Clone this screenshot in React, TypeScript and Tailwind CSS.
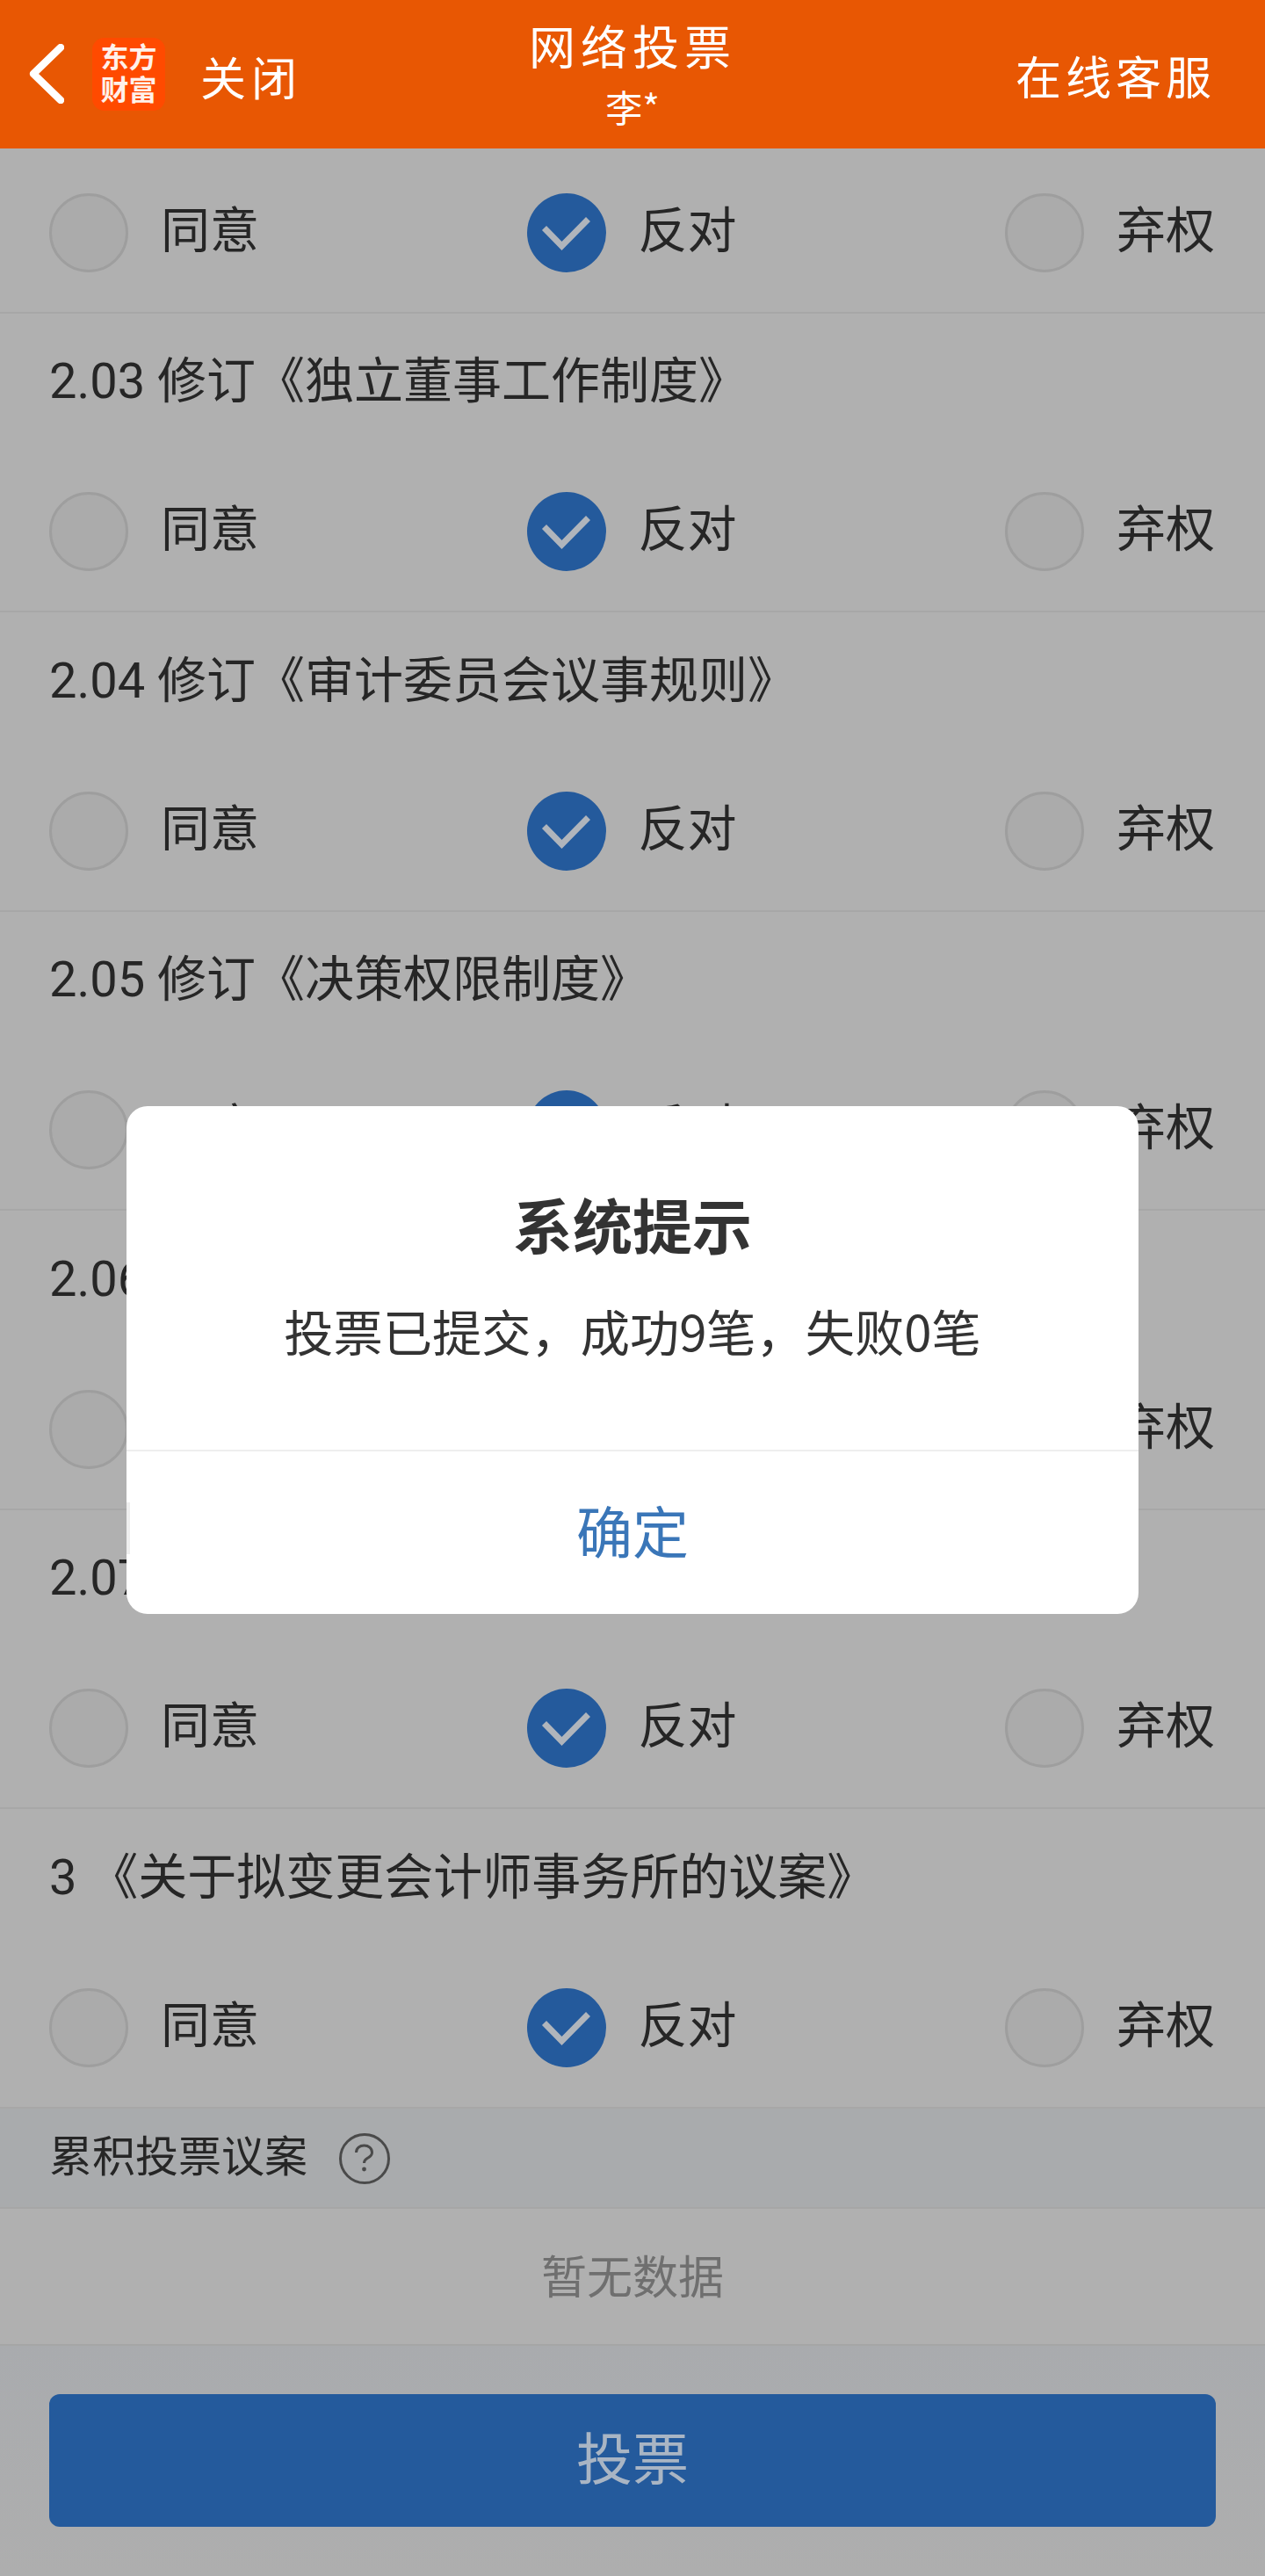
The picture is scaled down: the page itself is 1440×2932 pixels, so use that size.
import { Fragment } from 'react';

const proposals = [
  '2.03 修订《独立董事工作制度》',
  '2.04 修订《审计委员会议事规则》',
  '2.05 修订《决策权限制度》',
  '2.06 修订《募集资金管理制度》',
  '2.07 修订《关联交易制度》',
  '3 《关于拟变更会计师事务所的议案》',
];

function Option({ label, checked }: { label: string; checked?: boolean }) {
  return (
    <div className="flex items-center gap-[37px]">
      {checked ? (
        <svg width="90" height="90" viewBox="0 0 90 90" className="shrink-0 -ml-[1px]">
          <circle cx="45" cy="45" r="45" fill="#245a9c" />
          <path d="M19.5 39.5 L39.5 60 L69.5 29.5" fill="none" stroke="#b0b5bc" strokeWidth="7" />
        </svg>
      ) : (
        <div className="w-[90px] h-[90px] shrink-0 rounded-full bg-[#ababab] border-[3px] border-[#9e9e9e]" />
      )}
      <span className="text-[56px] leading-[70px] -translate-y-[2px] text-[#262626]">{label}</span>
    </div>
  );
}

function VoteRow() {
  return (
    <div className="h-[188px] pt-[51px] pl-[56px] pr-[57px] flex items-start justify-between border-b-2 border-[#a7a7a7]">
      <Option label="同意" />
      <Option label="反对" checked />
      <Option label="弃权" />
    </div>
  );
}

export default function App() {
  return (
    <div className="relative w-[1440px] h-[2932px] overflow-hidden bg-[#b0b0b0] font-['Roboto','Noto_Sans_CJK_SC',sans-serif]">
      {/* Header */}
      <div className="h-[168.5px] bg-[#e85703] grid grid-cols-3 items-center text-white font-['Noto_Sans_CJK_SC',sans-serif]">
        <div className="flex items-center pl-[33px]">
          <svg width="40" height="68" viewBox="0 0 40 68" className="shrink-0">
            <path d="M36 4 L5 34 L36 64" fill="none" stroke="#ffffff" strokeWidth="8.5" strokeLinecap="round" strokeLinejoin="round" />
          </svg>
          <div className="ml-[32px] w-[83px] h-[83px] shrink-0 rounded-[14px] bg-[#ff4a00] flex flex-col items-center justify-center pb-[5px] text-[#fff1ea] text-[32px] leading-[37px] font-bold">
            <span>东方</span>
            <span>财富</span>
          </div>
          <span className="ml-[40px] mt-[6px] text-[52px] leading-[70px] tracking-[6px]">关闭</span>
        </div>
        <div className="flex flex-col items-center">
          <span className="text-[53px] leading-[64px] tracking-[6px] -mt-[2px]">网络投票</span>
          <span className="text-[42px] leading-[52px] mt-[12px]">李*</span>
        </div>
        <div className="flex justify-end pr-[56px]">
          <span className="mt-[4px] text-[52px] leading-[70px] tracking-[5px]">在线客服</span>
        </div>
      </div>

      <VoteRow />

      {proposals.map((title) => (
        <Fragment key={title}>
          <div className="h-[152.5px] px-[56px] pt-[3px] flex items-center text-[56px] text-[#262626] whitespace-nowrap">
            {title}
          </div>
          <VoteRow />
        </Fragment>
      ))}

      {/* Cumulative voting */}
      <div className="h-[114.5px] pl-[56px] flex items-center gap-[36px] bg-[#a9abad] border-b-2 border-[#a6a6a6] text-[49px] text-[#262626]">
        <span>累积投票议案</span>
        <svg width="58" height="58" viewBox="0 0 58 58" className="shrink-0 mt-[2px]" fill="none" stroke="#4a4a4a" strokeWidth="3">
          <circle cx="29" cy="29" r="27.5" />
          <path d="M19.5 22 C19.5 17 23.5 14 28.5 14 C33.5 14 37.5 17 37.5 22 C37.5 26 34.5 27 31.5 29 C29.5 30.5 28.5 31 28.5 34" />
          <circle cx="28.5" cy="41" r="2.4" fill="#4a4a4a" stroke="none" />
        </svg>
      </div>
      <div className="h-[156px] pt-[5px] flex items-center justify-center border-b-2 border-[#a6a6a6] text-[52px] text-[#6f6f6f]">
        暂无数据
      </div>

      {/* Footer */}
      <div className="h-[262px] px-[56px] pt-[55px] bg-linear-to-b from-[#a9abae] to-[#aeaeae]">
        <div className="h-[151px] rounded-[12px] bg-[#245a9c] flex items-center justify-center text-[64px] text-[#a9b5c4]">
          投票
        </div>
      </div>

      {/* Dialog */}
      <div className="absolute left-[144px] top-[1259px] w-[1152px] h-[578px] rounded-[24px] bg-white overflow-hidden font-['Noto_Sans_CJK_SC',sans-serif]">
        <div className="h-[393px] pt-[94px] border-b-2 border-[#eeeeee] text-center text-[#333333]">
          <div className="text-[68px] leading-[80px] font-bold">系统提示</div>
          <div className="mt-[41px] text-[56.25px] leading-[80px]">投票已提交，成功9笔，失败0笔</div>
        </div>
        <div className="h-[185px] pb-[10px] flex items-center justify-center text-[64px] text-[#3a76b8]">确定</div>
        <div className="absolute left-0 top-[451px] w-[4px] h-[59px] bg-[#eeeeee]" />
      </div>
    </div>
  );
}
